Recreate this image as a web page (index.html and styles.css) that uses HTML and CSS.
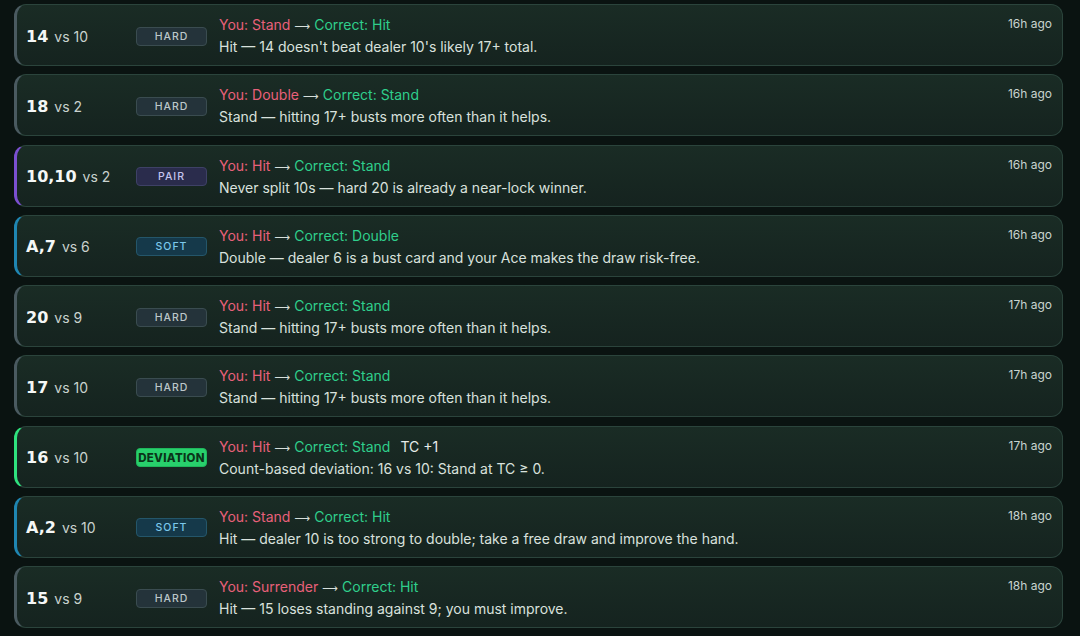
FILE: index.html
```html
<!DOCTYPE html>
<html>
<head>
<meta charset="utf-8">
<link rel="stylesheet" href="styles.css">
</head>
<body>
<div class="list">
  <div class="card hard">
    <div class="hand"><b>14</b><span class="vs">vs 10</span></div>
    <div class="badge b-hard">HARD</div>
    <div class="main">
      <div class="verdict"><span class="you">You: Stand</span> <span class="arrow">⟶</span> <span class="correct">Correct: Hit</span></div>
      <div class="desc">Hit — 14 doesn't beat dealer 10's likely 17+ total.</div>
    </div>
    <div class="time">16h ago</div>
  </div>
  <div class="card hard">
    <div class="hand"><b>18</b><span class="vs">vs 2</span></div>
    <div class="badge b-hard">HARD</div>
    <div class="main">
      <div class="verdict"><span class="you">You: Double</span> <span class="arrow">⟶</span> <span class="correct">Correct: Stand</span></div>
      <div class="desc">Stand — hitting 17+ busts more often than it helps.</div>
    </div>
    <div class="time">16h ago</div>
  </div>
  <div class="card pair">
    <div class="hand"><b>10,10</b><span class="vs">vs 2</span></div>
    <div class="badge b-pair">PAIR</div>
    <div class="main">
      <div class="verdict"><span class="you">You: Hit</span> <span class="arrow">⟶</span> <span class="correct">Correct: Stand</span></div>
      <div class="desc">Never split 10s — hard 20 is already a near-lock winner.</div>
    </div>
    <div class="time">16h ago</div>
  </div>
  <div class="card soft">
    <div class="hand"><b>A,7</b><span class="vs">vs 6</span></div>
    <div class="badge b-soft">SOFT</div>
    <div class="main">
      <div class="verdict"><span class="you">You: Hit</span> <span class="arrow">⟶</span> <span class="correct">Correct: Double</span></div>
      <div class="desc">Double — dealer 6 is a bust card and your Ace makes the draw risk-free.</div>
    </div>
    <div class="time">16h ago</div>
  </div>
  <div class="card hard">
    <div class="hand"><b>20</b><span class="vs">vs 9</span></div>
    <div class="badge b-hard">HARD</div>
    <div class="main">
      <div class="verdict"><span class="you">You: Hit</span> <span class="arrow">⟶</span> <span class="correct">Correct: Stand</span></div>
      <div class="desc">Stand — hitting 17+ busts more often than it helps.</div>
    </div>
    <div class="time">17h ago</div>
  </div>
  <div class="card hard">
    <div class="hand"><b>17</b><span class="vs">vs 10</span></div>
    <div class="badge b-hard">HARD</div>
    <div class="main">
      <div class="verdict"><span class="you">You: Hit</span> <span class="arrow">⟶</span> <span class="correct">Correct: Stand</span></div>
      <div class="desc">Stand — hitting 17+ busts more often than it helps.</div>
    </div>
    <div class="time">17h ago</div>
  </div>
  <div class="card dev">
    <div class="hand"><b>16</b><span class="vs">vs 10</span></div>
    <div class="badge b-dev">DEVIATION</div>
    <div class="main">
      <div class="verdict"><span class="you">You: Hit</span> <span class="arrow">⟶</span> <span class="correct">Correct: Stand</span><span class="tc">TC +1</span></div>
      <div class="desc">Count-based deviation: 16 vs 10: Stand at TC ≥ 0.</div>
    </div>
    <div class="time">17h ago</div>
  </div>
  <div class="card soft">
    <div class="hand"><b>A,2</b><span class="vs">vs 10</span></div>
    <div class="badge b-soft">SOFT</div>
    <div class="main">
      <div class="verdict"><span class="you">You: Stand</span> <span class="arrow">⟶</span> <span class="correct">Correct: Hit</span></div>
      <div class="desc">Hit — dealer 10 is too strong to double; take a free draw and improve the hand.</div>
    </div>
    <div class="time">18h ago</div>
  </div>
  <div class="card hard">
    <div class="hand"><b>15</b><span class="vs">vs 9</span></div>
    <div class="badge b-hard">HARD</div>
    <div class="main">
      <div class="verdict"><span class="you">You: Surrender</span> <span class="arrow">⟶</span> <span class="correct">Correct: Hit</span></div>
      <div class="desc">Hit — 15 loses standing against 9; you must improve.</div>
    </div>
    <div class="time">18h ago</div>
  </div>
</div>
</body>
</html>
```
FILE: styles.css
```css
html, body {
  margin: 0;
  padding: 0;
  height: 100%;
  overflow: hidden;
}
body {
  background: #0a1311;
  font-family: Inter, "Liberation Sans", sans-serif;
  color: #d6dfdb;
}
.list {
  display: flex;
  flex-direction: column;
  gap: 8.25px;
  padding: 4px 17px 0 14px;
}
.card {
  display: grid;
  grid-template-columns: 98px 71px 1fr auto;
  column-gap: 12px;
  align-items: center;
  height: 62px;
  box-sizing: border-box;
  padding: 9px 10px 7px 9px;
  border: 1px solid #2b443c;
  border-left: 3px solid #4a5a60;
  border-radius: 12px;
  background: linear-gradient(180deg, #1a2c25 0%, #15231f 100%);
}
.card.pair { border-left-color: #7b4fd0; }
.card.soft { border-left-color: #1f86b2; }
.card.dev { border-left-color: #2fe27e; }
.hand {
  display: flex;
  align-items: baseline;
  gap: 6px;
  white-space: nowrap;
}
.hand b {
  font-family: "DejaVu Sans", sans-serif;
  font-weight: bold;
  font-size: 16px;
  color: #f4f7f6;
}
.vs {
  font-size: 14px;
  color: #c9d2ce;
}
.badge {
  height: 19px;
  box-sizing: border-box;
  border-radius: 4px;
  display: flex;
  align-items: center;
  justify-content: center;
  font-size: 10.5px;
  font-weight: 500;
  letter-spacing: 1px;
}
.b-hard {
  background: #24333a;
  border: 1px solid #3a4c50;
  color: #bcc7ca;
}
.b-pair {
  background: #2a2c4c;
  border: 1px solid #3e4166;
  color: #c3c3ee;
}
.b-soft {
  background: #15394a;
  border: 1px solid #24566a;
  color: #7cc8ec;
}
.b-dev {
  background: #28d06c;
  border: 1px solid #1fb75c;
  color: #0a3519;
  font-weight: 800;
  letter-spacing: 0.3px;
  font-size: 11.5px;
}
.main {
  display: flex;
  flex-direction: column;
  font-size: 14px;
  line-height: 22px;
  white-space: nowrap;
}
.verdict {
  display: flex;
  align-items: baseline;
  gap: 4px;
  height: 22px;
  line-height: 22px;
}
.you { color: #e8607a; }
.arrow {
  font-family: "DejaVu Sans", sans-serif;
  font-size: 11px;
  line-height: 16px;
  color: #d7dfdb;
}
.correct { color: #2fcf8c; }
.tc {
  margin-left: 6px;
  color: #e6ecea;
}
.desc {
  height: 22px;
  color: #d9e1dd;
}
.time {
  align-self: start;
  font-size: 12px;
  line-height: 20px;
  color: #c8d4d0;
}
```
